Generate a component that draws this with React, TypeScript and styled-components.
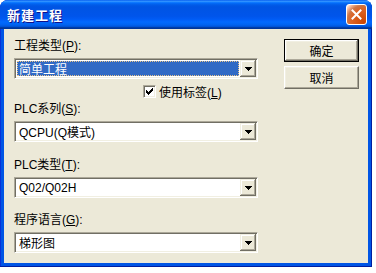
import React from 'react';
import styled, { createGlobalStyle } from 'styled-components';

const GlobalStyle = createGlobalStyle`
  html, body {
    margin: 0;
    padding: 0;
    background: #fff;
  }
  body {
    font-family: "Liberation Sans", "Noto Sans CJK SC", sans-serif;
    font-size: 12px;
    color: #000;
  }
`;

const Window = styled.div`
  width: 372px;
  height: 267px;
  box-sizing: border-box;
  display: flex;
  flex-direction: column;
  background: #0055e5;
  border-radius: 8px 8px 0 0;
  box-shadow: inset -1px -1px #001ea0, inset 1px 0 #0831d9;
  overflow: hidden;
`;

const TitleBar = styled.div`
  height: 29px;
  flex: none;
  display: flex;
  align-items: center;
  justify-content: space-between;
  padding: 0 5px 0 7px;
  background: linear-gradient(
    to bottom,
    #0058ee 0%,
    #3593ff 4%,
    #288eff 6%,
    #127dff 8%,
    #036ffc 10%,
    #0262ee 14%,
    #0057e5 20%,
    #0054e3 24%,
    #0055eb 56%,
    #005bf5 66%,
    #026afe 76%,
    #0062ef 86%,
    #0052d6 92%,
    #0040ab 94%,
    #003092 100%
  );
`;

const Title = styled.div`
  color: #fff;
  font-family: "Noto Sans CJK SC", sans-serif;
  font-size: 13px;
  font-weight: bold;
  letter-spacing: 1px;
  text-shadow: 1px 1px #0f1089;
`;

const CloseButton = styled.div`
  width: 21px;
  height: 21px;
  box-sizing: border-box;
  border: 1px solid #fff;
  border-radius: 3px;
  display: flex;
  align-items: center;
  justify-content: center;
  background: radial-gradient(circle at 90% 90%, #cc4600 0%, #dc6527 55%, #cd7546 70%, #ffccb2 90%, #fff 100%);
`;

const Client = styled.div`
  flex: 1;
  margin: 0 4px 4px 4px;
  background: #ece9d8;
  display: flex;
  padding: 9px 9px 0 10px;
`;

const LeftColumn = styled.div`
  width: 244px;
  display: flex;
  flex-direction: column;
`;

const RightColumn = styled.div`
  margin-left: 26px;
  margin-top: 1px;
  display: flex;
  flex-direction: column;
  gap: 4px;
`;

const Label = styled.div<{ $top?: number }>`
  height: 16px;
  line-height: 16px;
  margin-top: ${p => p.$top ?? 0}px;
  margin-bottom: 4px;
  white-space: nowrap;
`;

// classic sunken 3d edge, used by combos and the check box
const Combo = styled.div`
  height: 21px;
  box-sizing: border-box;
  display: flex;
  align-items: stretch;
  background: #fff;
  border: 1px solid;
  border-color: #aca899 #fff #fff #aca899;
  box-shadow: inset 1px 1px #716f64, inset -1px -1px #f1efe2;
  padding: 1px;
`;

const ComboText = styled.div<{ $selected?: boolean }>`
  flex: 1;
  display: flex;
  align-items: center;
  margin: 1px;
  padding-left: 1px;
  box-sizing: border-box;
  background: ${p => (p.$selected ? '#316ac5' : 'transparent')};
  color: ${p => (p.$selected ? '#fff' : '#000')};
  border: 1px dotted ${p => (p.$selected ? '#e7c38a' : 'transparent')};
  white-space: nowrap;
`;

const DropButton = styled.div`
  width: 16px;
  flex: none;
  display: flex;
  align-items: center;
  justify-content: center;
  background: #ece9d8;
  box-shadow: inset -1px -1px #716f64, inset 1px 1px #f1efe2, inset -2px -2px #aca899, inset 2px 2px #fff;
`;

const CheckRow = styled.div`
  height: 16px;
  margin: 4px 0 2px;
  padding-left: 129px;
  display: flex;
  align-items: center;
  gap: 3px;
`;

const CheckBox = styled.div`
  width: 13px;
  height: 13px;
  box-sizing: border-box;
  background: #fff;
  border: 1px solid;
  border-color: #aca899 #fff #fff #aca899;
  box-shadow: inset 1px 1px #716f64, inset -1px -1px #f1efe2;
  display: flex;
  align-items: center;
  justify-content: center;
`;

const Button = styled.div<{ $default?: boolean }>`
  width: 75px;
  height: 23px;
  box-sizing: border-box;
  display: flex;
  align-items: center;
  justify-content: center;
  background: #ece9d8;
  border: 1px solid;
  border-color: ${p => (p.$default ? '#000' : '#fff #716f64 #716f64 #fff')};
  box-shadow: ${p =>
    p.$default
      ? 'inset -1px -1px #716f64, inset 1px 1px #fff, inset -2px -2px #aca899, inset 2px 2px #f1efe2'
      : 'inset -1px -1px #aca899, inset 1px 1px #f1efe2'};
`;

const Arrow = () => (
  <svg width="7" height="4" viewBox="0 0 7 4" shapeRendering="crispEdges">
    <path d="M0 0h7v1H0zM1 1h5v1H1zM2 2h3v1H2zM3 3h1v1H3z" fill="#000" />
  </svg>
);

const CloseIcon = () => (
  <svg width="13" height="13" viewBox="0 0 13 13">
    <path d="M2.5 2.5L10.5 10.5M10.5 2.5L2.5 10.5" stroke="#fff" strokeWidth="2" strokeLinecap="square" />
  </svg>
);

const CheckIcon = () => (
  <svg width="9" height="9" viewBox="0 0 9 9" shapeRendering="crispEdges">
    <path d="M1 3h1v3H1zM2 4h1v3H2zM3 5h1v3H3zM4 4h1v3H4zM5 3h1v3H5zM6 2h1v3H6zM7 1h1v3H7z" fill="#000" />
  </svg>
);

const ComboBox = ({ value, selected }: { value: string; selected?: boolean }) => (
  <Combo>
    <ComboText $selected={selected}>{value}</ComboText>
    <DropButton>
      <Arrow />
    </DropButton>
  </Combo>
);

export default function App() {
  return (
    <>
      <GlobalStyle />
      <Window>
        <TitleBar>
          <Title>新建工程</Title>
          <CloseButton>
            <CloseIcon />
          </CloseButton>
        </TitleBar>
        <Client>
          <LeftColumn>
            <Label>
              工程类型(<u>P</u>):
            </Label>
            <ComboBox value="简单工程" selected />
            <CheckRow>
              <CheckBox>
                <CheckIcon />
              </CheckBox>
              <span>
                使用标签(<u>L</u>)
              </span>
            </CheckRow>
            <Label>
              PLC系列(<u>S</u>):
            </Label>
            <ComboBox value="QCPU(Q模式)" />
            <Label $top={15}>
              PLC类型(<u>T</u>):
            </Label>
            <ComboBox value="Q02/Q02H" />
            <Label $top={14}>
              程序语言(<u>G</u>):
            </Label>
            <ComboBox value="梯形图" />
          </LeftColumn>
          <RightColumn>
            <Button $default>确定</Button>
            <Button>取消</Button>
          </RightColumn>
        </Client>
      </Window>
    </>
  );
}
